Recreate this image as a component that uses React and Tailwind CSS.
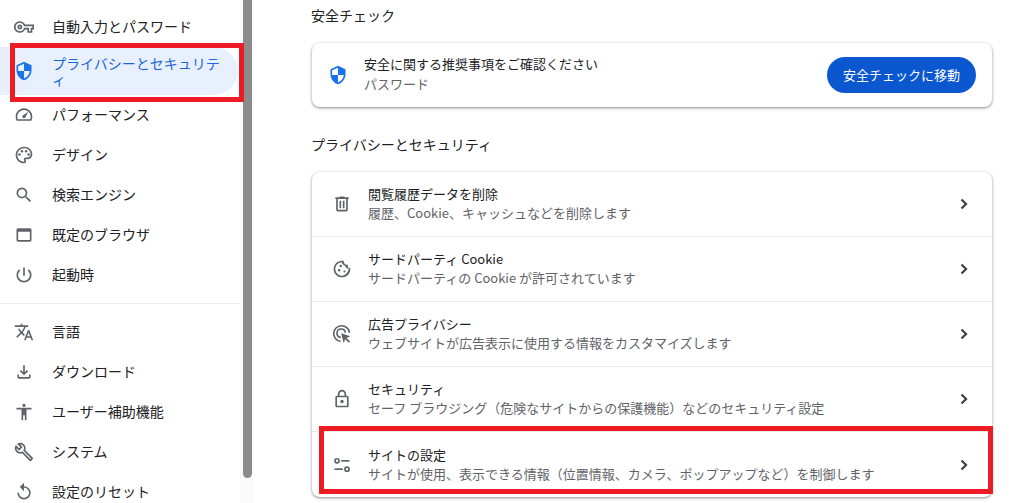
const I = ({ d, size = 20, cls = "text-[#5f6368]", children }) => (
  <svg width={size} height={size} viewBox="0 0 24 24" fill="currentColor" className={cls + " shrink-0"}>
    {d && <path d={d} fillRule="evenodd" />}
    {children}
  </svg>
);

const P = {
  key: "M22 19h-6v-4h-2.68c-1.14 2.42-3.6 4-6.32 4-3.86 0-7-3.14-7-7s3.14-7 7-7c2.72 0 5.17 1.58 6.32 4H24v6h-2v4zm-4-2h2v-4h2v-2H11.94l-.23-.67C11.01 8.34 9.11 7 7 7c-2.76 0-5 2.24-5 5s2.24 5 5 5c2.11 0 4.01-1.34 4.71-3.33l.23-.67H18v4zM7 15c-1.65 0-3-1.35-3-3s1.35-3 3-3 3 1.35 3 3-1.35 3-3 3zm0-4c-.55 0-1 .45-1 1s.45 1 1 1 1-.45 1-1-.45-1-1-1z",
  shield: "M12 1L3 5v6c0 5.55 3.84 10.74 9 12 5.16-1.26 9-6.45 9-12V5l-9-4zm0 10.99h7c-.53 4.12-3.28 7.79-7 8.94V12H5V6.3l7-3.11v8.8z",
  palette: "M12 22C6.49 22 2 17.51 2 12S6.49 2 12 2s10 4.04 10 9c0 3.31-2.69 6-6 6h-1.77c-.28 0-.5.22-.5.5 0 .12.05.23.13.33.41.47.64 1.06.64 1.67 0 1.38-1.12 2.5-2.5 2.5zm0-18c-4.41 0-8 3.59-8 8s3.59 8 8 8c.28 0 .5-.22.5-.5 0-.16-.08-.28-.14-.35-.41-.46-.63-1.05-.63-1.65 0-1.38 1.12-2.5 2.5-2.5H16c2.21 0 4-1.79 4-4 0-3.86-3.59-7-8-7z",
  search: "M15.5 14h-.79l-.28-.27A6.471 6.471 0 0 0 16 9.5 6.5 6.5 0 1 0 9.5 16c1.61 0 3.09-.59 4.23-1.57l.27.28v.79l5 4.99L20.49 19l-4.99-5zm-6 0C7.01 14 5 11.99 5 9.5S7.01 5 9.5 5 14 7.01 14 9.5 11.99 14 9.5 14z",
  web: "M19 4H5c-1.11 0-2 .9-2 2v12c0 1.1.89 2 2 2h14c1.1 0 2-.9 2-2V6c0-1.1-.89-2-2-2zm0 14H5V8h14v10z",
  power: "M13 3h-2v10h2V3zm4.83 2.17l-1.42 1.42C17.99 7.86 19 9.81 19 12c0 3.87-3.13 7-7 7s-7-3.13-7-7c0-2.19 1.01-4.14 2.58-5.42L6.17 5.17C4.23 6.82 3 9.26 3 12c0 4.97 4.03 9 9 9s9-4.03 9-9c0-2.74-1.23-5.18-3.17-6.83z",
  translate: "M12.87 15.07l-2.54-2.51.03-.03c1.74-1.94 2.98-4.17 3.71-6.53H17V4h-7V2H8v2H1v1.99h11.17C11.5 7.92 10.44 9.75 9 11.35 8.07 10.32 7.3 9.19 6.69 8h-2c.73 1.63 1.73 3.17 2.98 4.56l-5.09 5.02L4 19l5-5 3.11 3.11.76-2.04zM18.5 10h-2L12 22h2l1.12-3h4.75L21 22h2l-4.5-12zm-2.62 7l1.62-4.33L19.12 17h-3.24z",
  download: "M18 15v3H6v-3H4v3c0 1.1.9 2 2 2h12c1.1 0 2-.9 2-2v-3h-2zm-1-4l-1.41-1.41L13 12.17V4h-2v8.17L8.41 9.59 7 11l5 5 5-5z",
  access: "M12 2c1.1 0 2 .9 2 2s-.9 2-2 2-2-.9-2-2 .9-2 2-2zm9 7h-6v13h-2v-6h-2v6H9V9H3V7h18v2z",
  wrench: "M22.61 18.99l-9.08-9.08c.93-2.34.45-5.1-1.44-7C9.79.61 6.21.4 3.66 2.25L7.5 6.1 6.08 7.51 2.25 3.69C.39 6.23.6 9.82 2.9 12.11c1.86 1.86 4.57 2.35 6.89 1.48l9.11 9.11c.39.39 1.02.39 1.41 0l2.3-2.3c.4-.38.4-1.01 0-1.41zm-3 1.6l-9.46-9.46c-.61.45-1.29.72-2 .82-1.36.2-2.79-.21-3.83-1.25C3.37 9.76 2.93 8.5 3 7.26l3.09 3.09 4.24-4.24-3.09-3.09c1.24-.07 2.49.37 3.44 1.31 1.08 1.08 1.49 2.57 1.24 3.96-.12.71-.42 1.37-.88 1.96l9.45 9.45-.88.88z",
  reset: "M12 5V1L7 6l5 5V7c3.31 0 6 2.69 6 6s-2.69 6-6 6-6-2.69-6-6H4c0 4.42 3.58 8 8 8s8-3.58 8-8-3.58-8-8-8z",
  trash: "M7 21c-.55 0-1.02-.2-1.41-.59-.39-.39-.59-.86-.59-1.41V6H4V4h5V3h6v1h5v2h-1v13c0 .55-.2 1.02-.59 1.41-.39.39-.86.59-1.41.59H7zM17 6H7v13h10V6zM9 17h2V8H9v9zm4 0h2V8h-2v9z",
  lock: "M18 8h-1V6c0-2.76-2.24-5-5-5S7 3.24 7 6v2H6c-1.1 0-2 .9-2 2v10c0 1.1.9 2 2 2h12c1.1 0 2-.9 2-2V10c0-1.1-.9-2-2-2zM9 6c0-1.66 1.34-3 3-3s3 1.34 3 3v2H9V6zm9 14H6V10h12v10zm-6-3c1.1 0 2-.9 2-2s-.9-2-2-2-2 .9-2 2 .9 2 2 2z",
};

const Gauge = () => (
  <I>
    <path d="M12 4C6.5 4 2 8.500 2 14c0 1.800.4 3.500 1.200 5h17.600c.8-1.500 1.200-3.200 1.200-5 0-5.500-4.500-10-10-10zm7.500 13h-15c-.3-.9-.5-2-.5-3 0-4.400 3.600-8 8-8s8 3.600 8 8c0 1-.2 2.100-.5 3z" fillRule="evenodd" />
    <path d="M10.600 12.600c-.8.800-.8 2 0 2.800s2 .8 2.800 0L17 8l-6.400 4.600z" />
  </I>
);
const Cookie = () => (
  <I>
    <path fillRule="evenodd" d="M21.950 10.990c-1.790-.03-3.700-1.950-2.680-4.220-2.970 1-5.780-1.590-5.190-4.560C7.110.74 2 6.410 2 12c0 5.520 4.480 10 10 10 5.890 0 10.540-5.080 9.950-11.010zM12 20c-4.410 0-8.070-3.590-8-8 .07-4.410 3.490-7.900 7.760-7.980.25 1.940 1.900 3.660 3.850 3.970.39 1.340 1.140 2.400 2.390 3.080.65.350 1.300.420 2.130.420C19.650 15.720 16.400 20 12 20z" />
    <circle cx="10.500" cy="8.500" r="1.500" /><circle cx="8.500" cy="13.500" r="1.500" /><circle cx="15" cy="15" r="1.300" />
  </I>
);
const AdPrivacy = () => (
  <I>
    <path fill="none" stroke="currentColor" strokeWidth="2" d="M21 10.500A9.500 9.500 0 1 0 10.500 21" />
    <path fill="none" stroke="currentColor" strokeWidth="2" d="M16 10.500A5 5 0 1 0 10.500 16" />
    <path d="M11 11l11 3.800-4.600 2 4.300 4.300-1.500 1.500-4.300-4.300-2 4.600z" />
  </I>
);
const Tune = () => (
  <I>
    <g fill="none" stroke="currentColor" strokeWidth="2">
      <circle cx="6" cy="7" r="2.500" />
      <path d="M11 7h10" />
      <circle cx="18" cy="17" r="2.500" />
      <path d="M3 17h10" />
    </g>
  </I>
);
const Chevron = () => (
  <svg width="20" height="20" viewBox="0 0 24 24" fill="none" className="text-[#3c4043] shrink-0">
    <path d="M9 6.500l5.500 5.500L9 17.500" stroke="currentColor" strokeWidth="2.600" />
  </svg>
);

const NavRow = ({ icon, label }) => (
  <div className="h-10 flex items-center pl-[14px] text-[14px] text-[#202124]">
    {icon}
    <span className="ml-[18px] pb-[2px]">{label}</span>
  </div>
);

const Row = ({ icon, title, sub, last }) => (
  <div className={"h-[65px] flex items-center pl-[20px] pr-[18px] " + (last ? "" : "border-b border-[#e8eaed]")}>
    {icon}
    <div className="ml-[16px] pb-[2px] flex-1 text-[13px] leading-[19px]">
      <div className="text-[#202124]">{title}</div>
      <div className="text-[#5f6368]">{sub}</div>
    </div>
    <Chevron />
  </div>
);

const top = [
  [<I d={P.key} />, "自動入力とパスワード"],
];
const group1 = [
  [<Gauge />, "パフォーマンス"],
  [<I d={P.palette}><circle cx="6.500" cy="11.500" r="1.500" /><circle cx="9.500" cy="7.500" r="1.500" /><circle cx="14.500" cy="7.500" r="1.500" /><circle cx="17.500" cy="11.500" r="1.500" /></I>, "デザイン"],
  [<I d={P.search} />, "検索エンジン"],
  [<I d={P.web} />, "既定のブラウザ"],
  [<I d={P.power} />, "起動時"],
];
const group2 = [
  [<I d={P.translate} />, "言語"],
  [<I d={P.download} />, "ダウンロード"],
  [<I d={P.access} />, "ユーザー補助機能"],
  [<I d={P.wrench} />, "システム"],
  [<I d={P.reset} />, "設定のリセット"],
];

export default function App() {
  return (
    <div
      className="relative w-[1014px] h-[503px] overflow-hidden bg-white flex"
      style={{ fontFamily: '"Noto Sans CJK JP", "Noto Sans", sans-serif' }}
    >
      <nav className="w-[240px] shrink-0 pt-[7px]">
        {top.map(([i, l]) => <NavRow key={l} icon={i} label={l} />)}
        <div className="h-12 w-[238px] flex items-center pl-[14px] pr-[8px] rounded-r-[24px] bg-[#e8f0fe] text-[14px] leading-[16px] text-[#1a66d9]">
          <I d={P.shield} cls="text-[#1a73e8]" />
          <span className="ml-[18px]">プライバシーとセキュリティ</span>
        </div>
        {group1.map(([i, l]) => <NavRow key={l} icon={i} label={l} />)}
        <div className="my-2 h-px bg-[#e8eaed]" />
        {group2.map(([i, l]) => <NavRow key={l} icon={i} label={l} />)}
      </nav>

      <div className="w-[13px] shrink-0 bg-[#fafafa] pl-[3px]">
        <div className="w-[9px] h-[478px] bg-[#8b8b8b] rounded-b-[5px]" />
      </div>

      <main className="ml-[59px] w-[680px]">
        <h2 className="mt-[5px] -ml-px h-[21px] leading-[21px] text-[14px] text-[#202124]">安全チェック</h2>
        <div className="mt-[17px] h-16 rounded-lg bg-white shadow-[0_1px_3px_1px_rgba(60,64,67,0.2),0_1px_2px_rgba(60,64,67,0.35)] flex items-center pl-[16px] pr-[16px]">
          <I d={P.shield} cls="text-[#1a73e8]" />
          <div className="ml-[16px] pb-[2px] flex-1 text-[13px] leading-[20px]">
            <div className="text-[#202124]">安全に関する推奨事項をご確認ください</div>
            <div className="text-[#5f6368]">パスワード</div>
          </div>
          <button className="w-[149px] h-9 rounded-[18px] bg-[#0b57d0] text-white text-[13px] flex items-center justify-center">安全チェックに移動</button>
        </div>
        <h2 className="mt-[27px] -ml-px h-[21px] leading-[21px] text-[14px] text-[#202124]">プライバシーとセキュリティ</h2>
        <div className="mt-[17px] rounded-lg bg-white shadow-[0_1px_3px_1px_rgba(60,64,67,0.2),0_1px_2px_rgba(60,64,67,0.35)]">
          <Row icon={<I d={P.trash} />} title="閲覧履歴データを削除" sub="履歴、Cookie、キャッシュなどを削除します" />
          <Row icon={<Cookie />} title="サードパーティ Cookie" sub="サードパーティの Cookie が許可されています" />
          <Row icon={<AdPrivacy />} title="広告プライバシー" sub="ウェブサイトが広告表示に使用する情報をカスタマイズします" />
          <Row icon={<I d={P.lock} />} title="セキュリティ" sub="セーフ ブラウジング（危険なサイトからの保護機能）などのセキュリティ設定" />
          <Row last icon={<Tune />} title="サイトの設定" sub="サイトが使用、表示できる情報（位置情報、カメラ、ポップアップなど）を制御します" />
        </div>
      </main>

      <div className="absolute left-[10px] top-[43px] w-[234px] h-[59px] border-[5px] border-[#ed1c24]" />
      <div className="absolute left-[319px] top-[426px] w-[674px] h-[68px] border-[5px] border-[#ed1c24]" />
    </div>
  );
}
